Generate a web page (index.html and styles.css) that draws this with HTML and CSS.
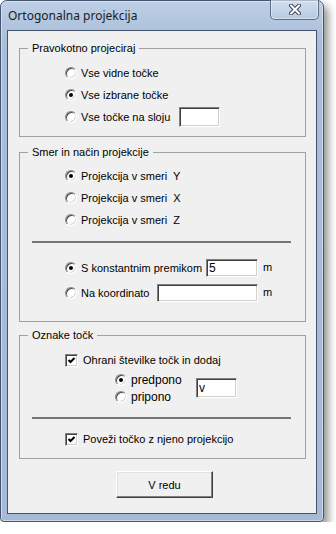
FILE: index.html
```html
<!DOCTYPE html>
<html lang="sl">
<head>
    <meta charset="UTF-8">
    <meta name="viewport" content="width=device-width, initial-scale=1.0">
    <title>Ortogonalna projekcija</title>
    <link rel="stylesheet" href="styles.css">
</head>
<body>
    <div class="window">
        <div class="titlebar">
            <span class="title">Ortogonalna projekcija</span>
            <div class="close">
                <svg width="12" height="11" viewBox="0 0 12 11">
                    <path d="M2 1.5 L10 9.5 M10 1.5 L2 9.5" stroke="#3b4a5f" stroke-width="4" stroke-linecap="round"/>
                    <path d="M2 1.5 L10 9.5 M10 1.5 L2 9.5" stroke="#ffffff" stroke-width="2" stroke-linecap="round"/>
                </svg>
            </div>
        </div>

        <div class="client">
            <fieldset class="group g1">
                <legend>Pravokotno projeciraj</legend>
                <div class="opt"><span class="radio"></span>Vse vidne točke</div>
                <div class="opt"><span class="radio on"></span>Vse izbrane točke</div>
                <div class="opt"><span class="radio"></span>Vse točke na sloju<span class="edit layer"></span></div>
            </fieldset>

            <fieldset class="group g2">
                <legend>Smer in način projekcije</legend>
                <div class="opt"><span class="radio on"></span>Projekcija v smeri&nbsp; Y</div>
                <div class="opt"><span class="radio"></span>Projekcija v smeri&nbsp; X</div>
                <div class="opt"><span class="radio"></span>Projekcija v smeri&nbsp; Z</div>
                <div class="sep"></div>
                <div class="opt field first"><span class="radio on"></span>S konstantnim premikom<span class="edit short">5</span><span class="unit">m</span></div>
                <div class="opt field"><span class="radio"></span>Na koordinato<span class="edit long"></span><span class="unit">m</span></div>
            </fieldset>

            <fieldset class="group g3">
                <legend>Oznake točk</legend>
                <div class="opt"><span class="check"><svg width="9" height="9" viewBox="0 0 9 9"><path d="M1.5 4 L3.5 6 L7.5 2" stroke="#000" stroke-width="2" fill="none"/></svg></span>Ohrani številke točk in dodaj</div>
                <div class="sub">
                    <div class="col">
                        <div class="opt"><span class="radio on"></span>predpono</div>
                        <div class="opt"><span class="radio"></span>pripono</div>
                    </div>
                    <span class="edit suffix">v</span>
                </div>
                <div class="sep"></div>
                <div class="opt last"><span class="check"><svg width="9" height="9" viewBox="0 0 9 9"><path d="M1.5 4 L3.5 6 L7.5 2" stroke="#000" stroke-width="2" fill="none"/></svg></span>Poveži točko z njeno projekcijo</div>
            </fieldset>

            <button class="ok">V redu</button>
        </div>
    </div>
</body>
</html>
```

FILE: styles.css
```css
* {
    margin: 0;
    padding: 0;
    box-sizing: border-box;
}

body {
    background: #ffffff;
    font-family: "Liberation Sans", Arial, sans-serif;
    font-size: 11px;
    color: #000000;
}

.window {
    width: 324px;
    height: 522px;
    border: 1px solid #45556d;
    border-radius: 7px 7px 4px 4px;
    background: linear-gradient(#bdcfe6, #aabed9 40px, #a6bad6);
    padding: 0 6px 7px;
    box-shadow: inset 0 0 0 1px rgba(255, 255, 255, 0.45), 4px 5px 8px rgba(0, 0, 0, 0.45);
    display: flex;
    flex-direction: column;
}

.titlebar {
    height: 29px;
    margin: 0 -6px;
    padding-left: 7px;
    display: flex;
    align-items: center;
}

.title {
    flex: 1;
    font-family: "Noto Sans", sans-serif;
    font-size: 12px;
    color: #1b1b1b;
}

.close {
    align-self: flex-start;
    margin: -1px 4px 0 0;
    width: 49px;
    height: 20px;
    border: 1px solid #5d6d86;
    border-top: none;
    border-radius: 0 0 5px 5px;
    background: linear-gradient(rgba(255, 255, 255, 0.3), rgba(255, 255, 255, 0.05));
    box-shadow: inset 0 0 0 1px rgba(255, 255, 255, 0.4);
    display: flex;
    justify-content: center;
    align-items: center;
}

.client {
    flex: 1;
    border: 1px solid #44536a;
    background: #f0f0f0;
    padding-left: 11px;
}

.group {
    width: 287px;
    border: 1px solid #a0a0a0;
    padding: 0 0 8px;
}

.group legend {
    margin-left: 8px;
    padding: 0 4px;
    line-height: 14px;
}

.g1 {
    margin-top: 10px;
    padding-top: 7px;
}

.g2 {
    margin-top: 8px;
    padding-top: 6px;
    padding-bottom: 17px;
}

.g3 {
    margin-top: 6px;
    padding-top: 7px;
}

.opt {
    display: flex;
    align-items: center;
    height: 22px;
    padding-left: 45px;
    white-space: nowrap;
}

.radio {
    position: relative;
    width: 12px;
    height: 12px;
    margin-right: 4px;
    border-radius: 50%;
    border: 1px solid;
    border-color: #8a8a8a #ffffff #ffffff #8a8a8a;
    box-shadow: inset 1px 1px #4a4a4a, inset -1px -1px #d8d8d8;
    background: #ffffff;
}

.radio.on::after {
    content: "";
    position: absolute;
    left: 3px;
    top: 3px;
    width: 4px;
    height: 4px;
    border-radius: 50%;
    background: #000000;
}

.check {
    width: 13px;
    height: 13px;
    margin-right: 5px;
    border: 1px solid;
    border-color: #808080 #ffffff #ffffff #808080;
    box-shadow: inset 1px 1px #404040, inset -1px -1px #d4d0c8;
    background: #ffffff;
    display: flex;
    justify-content: center;
    align-items: center;
}

.edit {
    display: block;
    height: 20px;
    padding-left: 2px;
    line-height: 18px;
    font-size: 12px;
    border: 1px solid;
    border-color: #808080 #ffffff #ffffff #808080;
    box-shadow: inset 1px 1px #404040, inset -1px -1px #d4d0c8;
    background: #ffffff;
}

.layer {
    width: 41px;
    margin-left: 9px;
}

.sep {
    margin: 10px 14px 0 12px;
    border-top: 2px solid #777777;
}

.field {
    padding-right: 22px;
}

.field.first {
    margin-top: 14px;
}

.field + .field {
    margin-top: 3px;
}

.field .edit {
    height: 18px;
    line-height: 16px;
    margin-left: auto;
}

.short {
    width: 52px;
}

.long {
    width: 101px;
}

.unit {
    width: 20px;
    margin-left: 5px;
    margin-top: -3px;
}

.sub {
    display: flex;
    align-items: center;
    padding-left: 95px;
}

.sub .col {
    width: 81px;
}

.sub .opt {
    height: 17px;
    padding-left: 0;
    font-size: 12px;
}

.suffix {
    width: 41px;
}

.g3 .sep {
    margin-top: 12px;
}

.opt.last {
    margin-top: 9px;
}

.ok {
    display: block;
    margin: 12px 0 0 97px;
    width: 97px;
    height: 27px;
    background: #f0f0f0;
    border: 1px solid;
    border-color: #ffffff #404040 #404040 #ffffff;
    box-shadow: inset -1px -1px #808080, inset 1px 1px #e3e3e3;
    font-family: "Liberation Sans", Arial, sans-serif;
    font-size: 11px;
    color: #000000;
}
```
